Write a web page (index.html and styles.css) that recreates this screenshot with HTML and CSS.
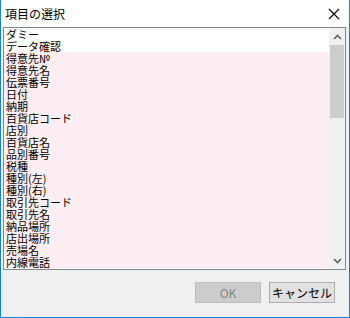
FILE: index.html
```html
<!DOCTYPE html>
<html lang="ja">
<head>
    <meta charset="UTF-8">
    <title>項目の選択</title>
    <link rel="stylesheet" href="styles.css">
</head>
<body>
    <div class="window">
        <div class="titlebar">
            <span class="title">項目の選択</span>
            <svg class="close" width="12" height="12" viewBox="0 0 12 12">
                <path d="M1 1 L11 11 M11 1 L1 11" stroke="#000" stroke-width="1.1" fill="none"/>
            </svg>
        </div>
        <div class="client">
            <div class="listbox">
                <ul class="items">
                    <li>ダミー</li>
                    <li>データ確認</li>
                    <li class="marked">得意先№</li>
                    <li class="marked">得意先名</li>
                    <li class="marked">伝票番号</li>
                    <li class="marked">日付</li>
                    <li class="marked">納期</li>
                    <li class="marked">百貨店コード</li>
                    <li class="marked">店別</li>
                    <li class="marked">百貨店名</li>
                    <li class="marked">品別番号</li>
                    <li class="marked">税種</li>
                    <li class="marked">種別(左)</li>
                    <li class="marked">種別(右)</li>
                    <li class="marked">取引先コード</li>
                    <li class="marked">取引先名</li>
                    <li class="marked">納品場所</li>
                    <li class="marked">店出場所</li>
                    <li class="marked">売場名</li>
                    <li class="marked">内線電話</li>
                </ul>
                <div class="scrollbar">
                    <div class="arrow">
                        <svg width="9" height="6" viewBox="0 0 9 6"><path d="M1 5 L4.5 1.5 L8 5" stroke="#606060" stroke-width="1.6" fill="none"/></svg>
                    </div>
                    <div class="track">
                        <div class="thumb"></div>
                    </div>
                    <div class="arrow">
                        <svg width="9" height="6" viewBox="0 0 9 6"><path d="M1 1 L4.5 4.5 L8 1" stroke="#606060" stroke-width="1.6" fill="none"/></svg>
                    </div>
                </div>
            </div>
            <div class="buttons">
                <button class="btn" disabled>OK</button>
                <button class="btn">キャンセル</button>
            </div>
        </div>
    </div>
</body>
</html>
```

FILE: styles.css
```css
body {
    margin: 0;
    padding: 0;
    font-family: "Noto Sans CJK JP", "Noto Sans", sans-serif;
}
.window {
    width: 350px;
    height: 318px;
    box-sizing: border-box;
    border: 1px solid #1c7fd6;
    border-top: none;
    background: #f0f0f0;
    display: flex;
    flex-direction: column;
}
.titlebar {
    height: 27px;
    background: #fff;
    display: flex;
    align-items: center;
    justify-content: space-between;
    padding: 0 9px 0 4px;
}
.title {
    font-size: 12px;
    color: #000;
}
.close {
    margin-top: 1px;
}
.client {
    flex: 1;
    padding: 0 2px 0 2px;
}
.listbox {
    height: 243px;
    width: 343px;
    box-sizing: border-box;
    border: 1px solid #828790;
    background: #fff;
    display: flex;
}
.items {
    flex: 1;
    list-style: none;
    margin: 0;
    padding: 0;
    overflow: hidden;
}
.items li {
    height: 12px;
    line-height: 12px;
    font-size: 11px;
    padding-left: 2px;
    color: #000;
    white-space: nowrap;
}
.items li.marked {
    background: #fdeef3;
}
.scrollbar {
    width: 16px;
    background: #f0f0f0;
    display: flex;
    flex-direction: column;
}
.arrow {
    height: 17px;
    display: flex;
    align-items: center;
    justify-content: center;
}
.track {
    flex: 1;
    padding: 0 1px;
}
.thumb {
    height: 73px;
    background: #cdcdcd;
}
.buttons {
    display: flex;
    justify-content: flex-end;
    gap: 8px;
    margin-top: 12px;
    padding-right: 12px;
}
.btn {
    width: 66px;
    height: 21px;
    box-sizing: border-box;
    border: 1px solid #adadad;
    background: #e1e1e1;
    font-family: "Noto Sans CJK JP", "Noto Sans", sans-serif;
    font-size: 12px;
    padding: 0;
    color: #000;
}
.btn:disabled {
    background: #cccccc;
    border-color: #bfbfbf;
    color: #838383;
}
```
